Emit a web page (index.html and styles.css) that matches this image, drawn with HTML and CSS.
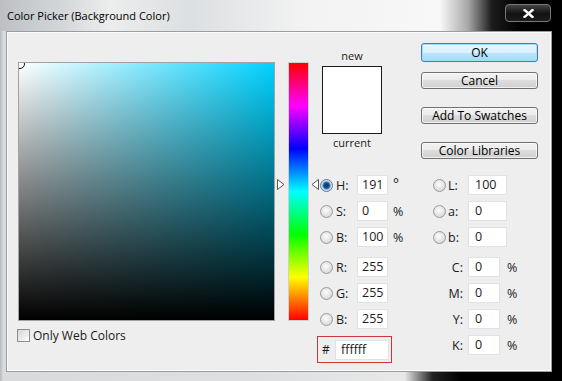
FILE: index.html
```html
<!DOCTYPE html>
<html>
    <head>
        <link rel="stylesheet" href="styles.css">
        <title>Color Picker (Background Color)</title>
    </head>
    <body>
        <div class="window">
            <div class="titlebar">
                <span class="title">Color Picker (Background Color)</span>
                <div class="close">
                    <svg width="11" height="9" viewBox="0 0 11 9">
                        <path d="M1.5 1 L9.5 8 M9.5 1 L1.5 8" stroke="#fff" stroke-width="2.4" stroke-linecap="square"/>
                    </svg>
                </div>
            </div>

            <div class="client">
                <div class="left">
                    <div class="field"><span class="marker"></span></div>
                    <div class="webonly"><span class="check"></span>Only Web Colors</div>
                </div>

                <div class="hue">
                    <div class="hue-bar"></div>
                    <svg class="arrow arrow-l" width="8" height="11" viewBox="0 0 8 11">
                        <path d="M0.5 0.5 L7 5.5 L0.5 10.5 Z" fill="#fff" stroke="#555"/>
                    </svg>
                    <svg class="arrow arrow-r" width="8" height="11" viewBox="0 0 8 11">
                        <path d="M7.5 0.5 L1 5.5 L7.5 10.5 Z" fill="#fff" stroke="#555"/>
                    </svg>
                </div>

                <div class="side">
                    <div class="top">
                        <div class="preview">
                            <div class="cap">new</div>
                            <div class="swatch"></div>
                            <div class="cap">current</div>
                        </div>
                        <div class="buttons">
                            <div class="btn btn-ok">OK</div>
                            <div class="btn btn-cancel">Cancel</div>
                            <div class="btn">Add To Swatches</div>
                            <div class="btn">Color Libraries</div>
                        </div>
                    </div>

                    <div class="fields">
                        <div class="col col-mid">
                            <div class="row"><span class="radio on"></span><span class="lbl">H:</span><span class="inp">191</span><span class="unit deg">°</span></div>
                            <div class="row"><span class="radio"></span><span class="lbl">S:</span><span class="inp">0</span><span class="unit">%</span></div>
                            <div class="row"><span class="radio"></span><span class="lbl">B:</span><span class="inp">100</span><span class="unit">%</span></div>
                            <div class="row sep"><span class="radio"></span><span class="lbl">R:</span><span class="inp">255</span></div>
                            <div class="row"><span class="radio"></span><span class="lbl">G:</span><span class="inp">255</span></div>
                            <div class="row"><span class="radio"></span><span class="lbl">B:</span><span class="inp">255</span></div>
                            <div class="hex"><span class="hash">#</span><span class="inp">ffffff</span></div>
                        </div>
                        <div class="col col-right">
                            <div class="row"><span class="radio"></span><span class="lbl">L:</span><span class="inp">100</span></div>
                            <div class="row"><span class="radio"></span><span class="lbl">a:</span><span class="inp">0</span></div>
                            <div class="row"><span class="radio"></span><span class="lbl">b:</span><span class="inp">0</span></div>
                            <div class="row sep cmyk"><span class="lbl">C:</span><span class="inp">0</span><span class="unit">%</span></div>
                            <div class="row cmyk"><span class="lbl">M:</span><span class="inp">0</span><span class="unit">%</span></div>
                            <div class="row cmyk"><span class="lbl">Y:</span><span class="inp">0</span><span class="unit">%</span></div>
                            <div class="row cmyk"><span class="lbl">K:</span><span class="inp">0</span><span class="unit">%</span></div>
                        </div>
                    </div>
                </div>
            </div>
        </div>
    </body>
</html>
```

FILE: styles.css
```css
body{
    margin: 0;
    background: #000;
    font-family: "Open Sans", "Liberation Sans", sans-serif;
    font-size: 12px;
    color: #1b1b1b;
}
.window{
    width: 562px;
    height: 381px;
    display: flex;
    flex-direction: column;
    background: linear-gradient(to right, #b4b8bc 0, #d8dadc 3px, #dddfe1 45%, #e8e8e8 72%, #222 77%, #000 82%);
}
.titlebar{
    height: 31px;
    flex: none;
    display: flex;
    justify-content: space-between;
    align-items: flex-start;
    background: linear-gradient(to right, #bcc0c4 0, #d3d6d9 60px, #eceded 110px, #dcdfe1 190px, #f2f2f2 300px, #f8f8f8 440px, #a8a8a8 468px, #1c1c1c 492px, #000 520px);
}
.title{
    margin: 8px 0 0 7px;
    line-height: 15px;
    font-size: 11px;
    color: #000;
}
.close{
    margin: 4px 11px 0 0;
    width: 46px;
    height: 18px;
    box-sizing: border-box;
    border: 1px solid #777;
    border-radius: 4px;
    background: linear-gradient(#444, #111 55%, #1d1d1d);
    display: flex;
    align-items: center;
    justify-content: center;
}
.client{
    flex: 1;
    margin: 0 10px 9px 6px;
    background: #eeeeee;
    border: 1px solid #9a9ea2;
    box-shadow: inset 0 0 0 1px #fbfbfb;
    display: flex;
    align-items: flex-start;
}

/* colour field */
.left{
    margin: 30px 0 0 11px;
}
.field{
    position: relative;
    overflow: hidden;
    width: 255px;
    height: 257px;
    border: 1px solid #a2a2a2;
    background: linear-gradient(to bottom, rgba(0,0,0,0), #000),
                linear-gradient(to right, #fff, #00d2ff);
}
.marker{
    position: absolute;
    left: -4px;
    top: -4px;
    width: 8px;
    height: 8px;
    border: 1px solid #111;
    border-radius: 50%;
}
.webonly{
    display: flex;
    align-items: center;
    gap: 3px;
    margin: 7px 0 0 -1px;
    height: 15px;
}
.check{
    width: 13px;
    height: 13px;
    box-sizing: border-box;
    border: 1px solid #8f8f8f;
    background: linear-gradient(135deg, #d6d6d6, #fdfdfd);
}

/* hue slider */
.hue{
    position: relative;
    margin: 30px 0 0 13px;
    width: 21px;
    height: 259px;
}
.hue-bar{
    width: 19px;
    height: 257px;
    border: 1px solid #d0d0d0;
    background: linear-gradient(#f00 0%, #f0f 16.67%, #00f 33.33%, #0ff 50%, #0f0 66.67%, #ff0 83.33%, #f00 100%);
}
.arrow{
    position: absolute;
    top: 117px;
}
.arrow-l{
    left: -11px;
}
.arrow-r{
    right: -10px;
}

/* right side */
.side{
    margin-left: 8px;
    padding-top: 11px;
}
.top{
    display: flex;
    height: 132px;
}
.preview{
    width: 88px;
    padding-top: 6px;
}
.cap{
    width: 60px;
    margin-left: 5px;
    text-align: center;
    line-height: 14px;
    font-size: 11px;
}
.swatch{
    width: 58px;
    height: 66px;
    margin: 3px 0 2px 5px;
    border: 1px solid #1a1a1a;
    background: #fff;
}
.buttons{
    margin-left: 16px;
    width: 117px;
    display: flex;
    flex-direction: column;
}
.btn{
    height: 17px;
    margin-top: 18px;
    box-sizing: border-box;
    border: 1px solid #707070;
    border-radius: 3px;
    background: linear-gradient(#f2f2f2, #ebebeb 50%, #dddddd 50%, #cfcfcf);
    box-shadow: inset 0 0 0 1px rgba(255,255,255,.7);
    text-align: center;
    line-height: 15px;
    color: #000;
}
.btn-ok{
    height: 19px;
    margin-top: 0;
    line-height: 17px;
    border-color: #3c7fb1;
    background: linear-gradient(#eaf6fd, #d9f0fc 50%, #bee6fd 50%, #a7d9f5);
    box-shadow: inset 0 0 0 1px #9ee2f9;
}
.btn-cancel{
    margin-top: 10px;
}

/* value fields */
.fields{
    display: flex;
}
.col{
    display: flex;
    flex-direction: column;
    gap: 6px;
}
.col-mid{
    width: 113px;
}
.row{
    display: flex;
    align-items: center;
    height: 20px;
}
.row.sep{
    margin-top: 4px;
}
.radio{
    width: 13px;
    height: 13px;
    margin-left: 3px;
    box-sizing: border-box;
    border: 1px solid #9a9a9a;
    border-radius: 50%;
    background: radial-gradient(circle at 45% 40%, #fdfdfd, #d4d4d4 85%);
}
.radio.on{
    border-color: #5a7da0;
    background: radial-gradient(circle, #123f66 0 2px, #3d86c6 3.5px, #bcd6ea 4.5px, #e6e6e6 6px);
}
.lbl{
    font-size: 12.5px;
}
.col-mid .lbl{
    width: 21px;
    margin-left: 3px;
}
.col-right .lbl{
    width: 20px;
    margin-left: 2px;
}
.col-right .cmyk .lbl{
    width: 33px;
    margin-left: 0;
    text-align: right;
}
.inp{
    box-sizing: border-box;
    height: 20px;
    background: #fff;
    border: 1px solid #e0e2e5;
    line-height: 18px;
    font-size: 12.5px;
}
.col-mid .inp{
    width: 31px;
    padding-left: 4px;
}
.col-right .inp{
    width: 39px;
    padding-left: 6px;
}
.col-right .cmyk .inp{
    width: 32px;
    margin-left: 5px;
}
.unit{
    margin-left: 5px;
    font-size: 12.5px;
}
.cmyk .unit{
    margin-left: 7px;
}
.deg{
    align-self: flex-start;
    margin-top: -1px;
    font-size: 14px;
}
.hex{
    margin-top: 1px;
    width: 75px;
    height: 27px;
    box-sizing: border-box;
    border: 1px solid #c9373a;
    display: flex;
    align-items: flex-start;
    padding: 3px 0 0 4px;
}
.hash{
    width: 13px;
    line-height: 20px;
}
.hex .inp{
    width: 54px;
    padding-left: 5px;
}
```
